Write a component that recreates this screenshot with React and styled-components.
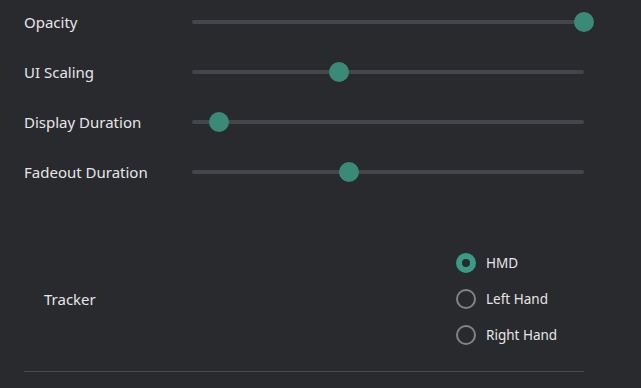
import React from "react";
import styled, { createGlobalStyle } from "styled-components";

const Global = createGlobalStyle`
  html, body { margin: 0; padding: 0; background: #292a2e; }
  body { font-family: "Noto Sans", "Open Sans", sans-serif; }
`;

const Page = styled.div`
  width: 641px;
  height: 388px;
  background: #292a2e;
  box-sizing: border-box;
  padding: 0 57px 0 24px;
  display: flex;
  flex-direction: column;
  overflow: hidden;
`;

const Sliders = styled.div`
  display: flex;
  flex-direction: column;
  gap: 6px;
`;

const Row = styled.div`
  height: 44px;
  display: grid;
  grid-template-columns: 168px 1fr;
  align-items: center;
`;

const Label = styled.div`
  color: #e6e6e6;
  font-size: 15px;
`;

const Track = styled.div`
  position: relative;
  height: 4px;
  border-radius: 2px;
  background: #45464b;
`;

const Thumb = styled.div`
  position: absolute;
  top: 50%;
  width: 20px;
  height: 20px;
  border-radius: 50%;
  background: #3a8a78;
  transform: translate(-50%, -50%);
`;

const Tracker = styled.div`
  margin-top: 51px;
  display: grid;
  grid-template-columns: 412px 1fr;
  align-items: center;
  padding-left: 20px;
`;

const RadioGroup = styled.div`
  display: flex;
  flex-direction: column;
`;

const RadioRow = styled.div`
  height: 36px;
  display: flex;
  align-items: center;
  gap: 10px;
`;

const Circle = styled.div`
  width: 20px;
  height: 20px;
  box-sizing: border-box;
  border-radius: 50%;
  border: ${(p) => (p.$checked ? "6px solid #3a9a84" : "2px solid #838386")};
  background: ${(p) => (p.$checked ? "#292a2e" : "transparent")};
`;

const RadioLabel = styled.span`
  color: #e6e6e6;
  font-size: 13.5px;
`;

const Divider = styled.div`
  margin-top: 18px;
  height: 1px;
  background: #4a4b50;
`;

const sliders = [
  { label: "Opacity", value: 1 },
  { label: "UI Scaling", value: 0.375 },
  { label: "Display Duration", value: 0.069 },
  { label: "Fadeout Duration", value: 0.4 },
];

const options = [
  { label: "HMD", checked: true },
  { label: "Left Hand" },
  { label: "Right Hand" },
];

export default function App() {
  return (
    <>
      <Global />
      <Page>
        <Sliders>
          {sliders.map((s) => (
            <Row key={s.label}>
              <Label>{s.label}</Label>
              <Track>
                <Thumb style={{ left: `${s.value * 100}%` }} />
              </Track>
            </Row>
          ))}
        </Sliders>
        <Tracker>
          <Label>Tracker</Label>
          <RadioGroup>
            {options.map((o) => (
              <RadioRow key={o.label}>
                <Circle $checked={o.checked} />
                <RadioLabel>{o.label}</RadioLabel>
              </RadioRow>
            ))}
          </RadioGroup>
        </Tracker>
        <Divider />
      </Page>
    </>
  );
}
